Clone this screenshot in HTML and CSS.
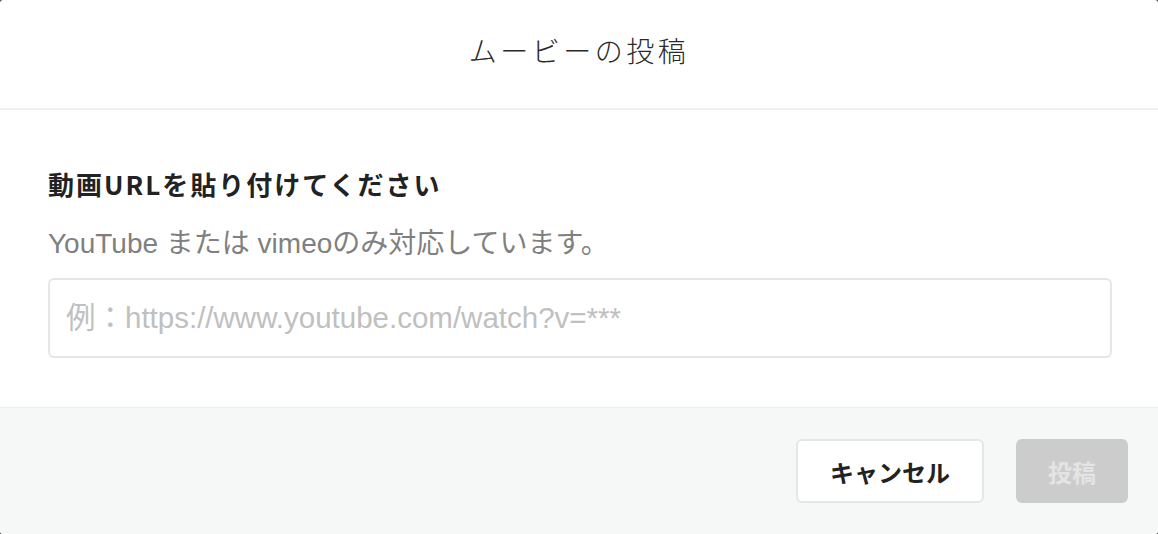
FILE: index.html
```html
<!DOCTYPE html>
<html lang="ja">
<head>
<meta charset="utf-8">
<title>ムービーの投稿</title>
<link rel="stylesheet" href="styles.css">
</head>
<body>
<div class="modal">
  <header class="modal-header">
    <h1 class="modal-title">ムービーの投稿</h1>
  </header>
  <section class="modal-body">
    <h2 class="field-label">動画URLを貼り付けてください</h2>
    <p class="field-help">YouTube または vimeoのみ対応しています。</p>
    <input class="url-input" type="text" placeholder="例：https://www.youtube.com/watch?v=***">
  </section>
  <footer class="modal-footer">
    <button class="btn btn-cancel" type="button">キャンセル</button>
    <button class="btn btn-submit" type="button" disabled>投稿</button>
  </footer>
</div>
</body>
</html>
```
FILE: styles.css
```css
html, body {
  margin: 0;
  padding: 0;
  height: 100%;
  background: #3a3a3a;
}
body {
  font-family: "Noto Sans CJK JP", "Noto Sans", sans-serif;
  color: #222;
}
.modal {
  height: 534px;
  display: flex;
  flex-direction: column;
  background: #fff;
  border-radius: 3px;
  overflow: hidden;
}
.modal-header {
  height: 110px;
  flex: none;
  box-sizing: border-box;
  padding-bottom: 8px;
  border-bottom: 2px solid #f0f0f0;
  display: flex;
  align-items: center;
  justify-content: center;
}
.modal-title {
  margin: 0;
  font-size: 28px;
  font-weight: 300;
  color: #2a2a2a;
  letter-spacing: 3.5px;
  line-height: 40px;
}
.modal-body {
  flex: 1;
  padding: 54px 46px 0 48px;
}
.field-label {
  margin: 0;
  font-size: 26px;
  font-weight: 700;
  line-height: 40px;
  letter-spacing: 2px;
  color: #222;
}
.field-help {
  margin: 20px 0 0;
  font-family: "Liberation Sans", "Noto Sans CJK JP", sans-serif;
  font-size: 28px;
  line-height: 40px;
  color: #808080;
}
.url-input {
  display: block;
  box-sizing: border-box;
  width: 100%;
  height: 80px;
  margin-top: 14px;
  padding: 0 16px;
  border: 2px solid #e6e6e6;
  border-radius: 6px;
  font-family: "Liberation Sans", "Noto Sans CJK JP", sans-serif;
  font-size: 29.5px;
  color: #333;
  outline: none;
}
.url-input::placeholder {
  color: #c0c0c0;
}
.modal-footer {
  height: 127px;
  flex: none;
  box-sizing: border-box;
  background: #f6f7f7;
  border-top: 1px solid #ececec;
  display: flex;
  justify-content: flex-end;
  align-items: center;
  gap: 32px;
  padding: 0 30px 0 0;
}
.btn {
  height: 64px;
  border-radius: 6px;
  font-family: "Noto Sans CJK JP", sans-serif;
  font-size: 24px;
  font-weight: 700;
  cursor: pointer;
}
.btn-cancel {
  width: 188px;
  background: #fff;
  border: 2px solid #e6e6e6;
  color: #222;
}
.btn-submit {
  width: 112px;
  background: #cccccc;
  border: none;
  color: #e4e4e4;
}
```
